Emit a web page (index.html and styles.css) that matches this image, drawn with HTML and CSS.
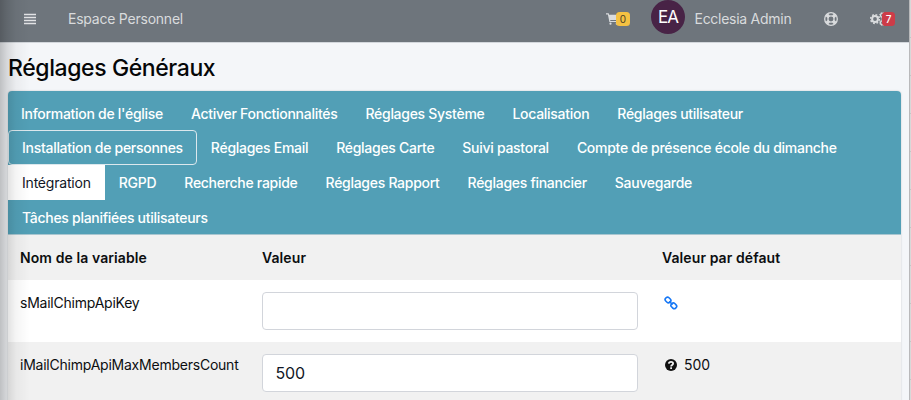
FILE: index.html
```html
<!DOCTYPE html>
<html lang="fr">
<head>
<meta charset="utf-8">
<title>Réglages Généraux</title>
<link rel="stylesheet" href="styles.css">
</head>
<body>
<div class="page">
  <header class="navbar">
    <svg class="bars" viewBox="0 0 12 12"><path d="M0 1.5h12M0 4.5h12M0 7.5h12M0 10.5h12" stroke="#e2e3e5" stroke-width="1.6"/></svg>
    <span class="brand">Espace Personnel</span>
    <div class="cart">
      <svg class="cart-icon" viewBox="0 0 13 12"><path d="M0 .3h2.7l.4 1.5H13l-.8 5.1H4.2l.2 1h7.4v1.2H3.4L1.9 1.5H0z"/><circle cx="4.5" cy="10.7" r="1.1"/><circle cx="10.8" cy="10.7" r="1.1"/></svg>
      <span class="badge badge-warning">0</span>
    </div>
    <span class="avatar">EA</span>
    <span class="user">Ecclesia Admin</span>
    <svg class="ring" viewBox="0 0 14 14" fill="none" stroke="#dadcde"><circle cx="7" cy="7" r="6.3" stroke-width="1.3"/><circle cx="7" cy="7" r="3.1" stroke-width="1.3"/><path d="M2.7 2.7l2 2M11.3 2.7l-2 2M2.7 11.3l2-2M11.3 11.3l-2-2" stroke-width="3.4"/></svg>
    <div class="settings">
      <svg class="gears" viewBox="0 0 16 14" fill="none" stroke="#dadcde"><circle cx="5" cy="7" r="2.9" stroke-width="2"/><circle cx="5" cy="7" r="4.4" stroke-width="1.5" stroke-dasharray="1.75 1.7"/><circle cx="12.4" cy="3.3" r="1.9" stroke-width="1.2"/><circle cx="12.4" cy="3.3" r="2.8" stroke-dasharray="1.1 1.1"/><circle cx="12.4" cy="10.7" r="1.9" stroke-width="1.2"/><circle cx="12.4" cy="10.7" r="2.8" stroke-dasharray="1.1 1.1"/></svg>
      <span class="badge badge-danger">7</span>
    </div>
  </header>
  <main>
    <h1>Réglages Généraux</h1>
    <section class="card">
      <nav class="tabs">
        <div class="tab-row tab-row-first"><a>Information de l'église</a><a>Activer Fonctionnalités</a><a>Réglages Système</a><a>Localisation</a><a>Réglages utilisateur</a></div>
        <div class="tab-row"><a class="focus">Installation de personnes</a><a>Réglages Email</a><a>Réglages Carte</a><a>Suivi pastoral</a><a>Compte de présence école du dimanche</a></div>
        <div class="tab-row"><a class="active">Intégration</a><a>RGPD</a><a>Recherche rapide</a><a>Réglages Rapport</a><a>Réglages financier</a><a>Sauvegarde</a></div>
        <div class="tab-row"><a>Tâches planifiées utilisateurs</a></div>
      </nav>
      <div class="row row-head"><b>Nom de la variable</b><b>Valeur</b><b>Valeur par défaut</b></div>
      <div class="row row-plain">
        <span>sMailChimpApiKey</span>
        <div class="field"></div>
        <div class="default"><svg class="icon" viewBox="0 0 14 14" fill="none" stroke="#1677f5" stroke-width="1.6"><rect x="-2.9" y="-2.3" width="5.8" height="4.6" rx="2" transform="translate(4 4) rotate(45)"/><rect x="-2.9" y="-2.3" width="5.8" height="4.6" rx="2" transform="translate(9.8 9.8) rotate(45)"/><path d="M5.2 5.2l3.4 3.4"/></svg></div>
      </div>
      <div class="row row-odd">
        <span>iMailChimpApiMaxMembersCount</span>
        <div class="field">500</div>
        <div class="default"><svg class="icon" viewBox="0 0 14 14"><circle cx="7" cy="7" r="6" fill="#111"/><path d="M4.8 5.6C5 3.4 9.1 3.3 9.1 5.5 9.1 7 7.1 6.8 7.1 8.4" fill="none" stroke="#f1f1f1" stroke-width="1.8"/><path d="M6.2 9.2h1.8v1.7H6.2z" fill="#f1f1f1"/></svg>500</div>
      </div>
    </section>
  </main>
  <div class="shade"></div>
</div>
<aside class="edge"></aside>
</body>
</html>
```
FILE: styles.css
```css
* { box-sizing: border-box; }
body {
  margin: 0;
  height: 400px;
  overflow: hidden;
  display: flex;
  font: 14px/20px Inter, "Liberation Sans", sans-serif;
  letter-spacing: -.23px;
  color: #0c0e10;
  background: #d2d2d3;
}
.page { position: relative; width: 909px; height: 400px; overflow: hidden; background: #f4f6f9; }
.edge { flex: 1; border-left: 1px solid #b9b9bb; background: repeating-linear-gradient(#d8d8d8 0 37px, #c4c4c4 37px 38px); }
.navbar {
  height: 42.5px;
  padding-left: 24px;
  display: flex;
  align-items: center;
  background: #6e757c;
  border-bottom: 1px solid #d3d7dc;
  color: #d9dbdd;
  padding-bottom: 3px;
}
.bars { width: 12px; height: 12px; margin-right: 32px; }
.brand { width: 538px; }
.cart, .settings { display: flex; align-items: center; }
.cart { width: 45px; }
.cart-icon { width: 13px; height: 12px; fill: #dadcde; }
.badge { height: 14px; border-radius: 3.5px; font-size: 10px; line-height: 14px; text-align: center; letter-spacing: 0; z-index: 1; }
.badge-warning { width: 14px; margin-left: -3px; background: #f5c142; color: #4b4022; }
.badge-danger { width: 13px; margin-left: -4px; background: #cd3c48; color: #fff; font-weight: 500; }
.avatar { width: 34px; height: 34px; margin-top: -4px; margin-right: 9.5px; border-radius: 50%; background: #482346; color: #fff; font-size: 17px; line-height: 34px; text-align: center; letter-spacing: -.9px; }
.user { width: 129.5px; letter-spacing: -.27px; }
.ring { width: 14px; height: 14px; margin-right: 32px; }
.gears { width: 16px; height: 14px; }
main { padding: 10.5px 8px 0; }
h1 { margin: 0; height: 38px; font-size: 23px; line-height: 30px; font-weight: 500; letter-spacing: -.4px; color: #050607; }
.card { border-radius: 4px 4px 0 0; overflow: hidden; box-shadow: 0 0 2px rgba(0,0,0,.2); }
.tabs { height: 143.5px; padding-top: 4.6px; background: #529fb6; color: #fff; font-weight: 500; letter-spacing: -.285px; border-bottom: 1px solid #a9c6d0; }
.tab-row { display: flex; height: 34.7px; }
.tab-row-first { margin-left: -1px; }
.tabs a { padding: 0 13px; height: 35px; border: 1px solid transparent; line-height: 33px; white-space: nowrap; }
.tabs .focus { border-color: #dce8ed; border-radius: 4px; }
.tabs .active { background: #fff; color: #111626; font-weight: 400; letter-spacing: -.2px; }
.row { display: grid; grid-template-columns: 242px 400px 1fr; padding: 12px 12px; height: 62.3px; }
.row-head { height: 45px; padding-top: 13px; background: #f1f1f1; letter-spacing: .09px; }
.row b { font-weight: 600; }
.row-plain { background: #fff; }
.row-odd { background: #f1f1f1; }
.row-plain > span, .row-odd > span { padding-top: 1px; }
.field { width: 376px; height: 38px; padding: 0 12.5px; border: 1px solid #d2d5db; border-radius: 4px; background: #fff; font-size: 16px; line-height: 37px; letter-spacing: -.2px; color: #111626; }
.default { display: flex; height: 22px; align-items: center; gap: 6px; padding-left: 2px; letter-spacing: 0; }
.icon { width: 14px; height: 14px; }
.shade { position: absolute; inset: 0 auto 0 0; width: 30px; background: linear-gradient(90deg, rgba(0,0,0,.22), rgba(0,0,0,.12) 7px, rgba(0,0,0,.04) 16px, transparent); }
```
